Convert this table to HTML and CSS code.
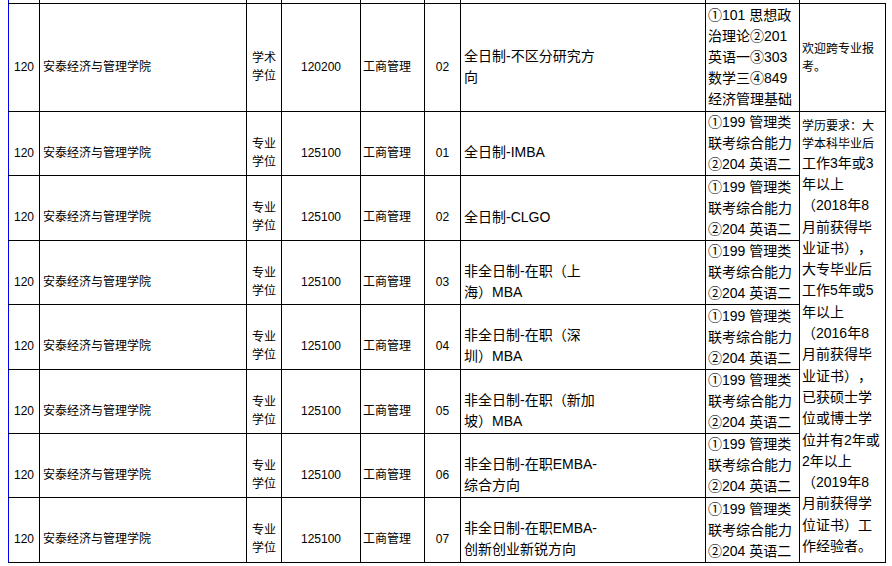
FILE: index.html
```html
<!DOCTYPE html>
<html lang="zh-CN">
<head>
<meta charset="utf-8">
<title>招生专业目录</title>
<link rel="stylesheet" href="styles.css">
</head>
<body>
<table class="grid">
<colgroup>
<col class="w1"><col class="w2"><col class="w3"><col class="w4"><col class="w5"><col class="w6"><col class="w7"><col class="w8"><col class="w9">
</colgroup>
<tbody>
<tr class="cut"><td></td><td></td><td></td><td></td><td></td><td></td><td></td><td></td><td></td></tr>
<tr class="h108">
<td class="c sh">120</td><td class="l sh">安泰经济与管理学院</td><td class="c sh">学术学位</td><td class="c sh">120200</td><td class="l2 sh">工商管理</td><td class="c sh">02</td><td class="dir sh"><div class="dirw">全日制-不区分研究方向</div></td><td class="exam">①101 思想政治理论②201 英语一③303 数学三④849 经济管理基础</td><td class="note1">欢迎跨专业报考。</td>
</tr>
<tr class="h64">
<td class="c sh">120</td><td class="l sh">安泰经济与管理学院</td><td class="c sh">专业学位</td><td class="c sh">125100</td><td class="l2 sh">工商管理</td><td class="c sh">01</td><td class="dir sh"><div class="dirw">全日制-IMBA</div></td><td class="exam">①199 管理类联考综合能力②204 英语二</td>
<td class="note" rowspan="7"><div class="note-a">学历要求：大学本科毕业后</div><div class="note-b">工作3年或3年以上（2018年8月前获得毕业证书），大专毕业后工作5年或5年以上（2016年8月前获得毕业证书），已获硕士学位或博士学位并有2年或2年以上（2019年8月前获得学位证书）工作经验者。</div></td>
</tr>
<tr class="h65">
<td class="c sh">120</td><td class="l sh">安泰经济与管理学院</td><td class="c sh">专业学位</td><td class="c sh">125100</td><td class="l2 sh">工商管理</td><td class="c sh">02</td><td class="dir sh"><div class="dirw">全日制-CLGO</div></td><td class="exam">①199 管理类联考综合能力②204 英语二</td>
</tr>
<tr class="h64">
<td class="c sh">120</td><td class="l sh">安泰经济与管理学院</td><td class="c sh">专业学位</td><td class="c sh">125100</td><td class="l2 sh">工商管理</td><td class="c sh">03</td><td class="dir sh"><div class="dirw">非全日制-在职（上海）MBA</div></td><td class="exam">①199 管理类联考综合能力②204 英语二</td>
</tr>
<tr class="h65">
<td class="c sh">120</td><td class="l sh">安泰经济与管理学院</td><td class="c sh">专业学位</td><td class="c sh">125100</td><td class="l2 sh">工商管理</td><td class="c sh">04</td><td class="dir sh"><div class="dirw">非全日制-在职（深圳）MBA</div></td><td class="exam">①199 管理类联考综合能力②204 英语二</td>
</tr>
<tr class="h64">
<td class="c sh">120</td><td class="l sh">安泰经济与管理学院</td><td class="c sh">专业学位</td><td class="c sh">125100</td><td class="l2 sh">工商管理</td><td class="c sh">05</td><td class="dir sh"><div class="dirw">非全日制-在职（新加坡）MBA</div></td><td class="exam">①199 管理类联考综合能力②204 英语二</td>
</tr>
<tr class="h64">
<td class="c sh">120</td><td class="l sh">安泰经济与管理学院</td><td class="c sh">专业学位</td><td class="c sh">125100</td><td class="l2 sh">工商管理</td><td class="c sh">06</td><td class="dir sh"><div class="dirw">非全日制-在职EMBA-综合方向</div></td><td class="exam">①199 管理类联考综合能力②204 英语二</td>
</tr>
<tr class="h65">
<td class="c sh">120</td><td class="l sh">安泰经济与管理学院</td><td class="c sh">专业学位</td><td class="c sh">125100</td><td class="l2 sh">工商管理</td><td class="c sh">07</td><td class="dir sh"><div class="dirw">非全日制-在职EMBA-创新创业新锐方向</div></td><td class="exam">①199 管理类联考综合能力②204 英语二</td>
</tr>
</tbody>
</table>
</body>
</html>
```
FILE: styles.css
```css
html, body {
  margin: 0;
  padding: 0;
  background: #ffffff;
}
body {
  font-family: "Liberation Sans", "Noto Sans CJK SC", sans-serif;
  color: #000000;
  overflow: hidden;
}
.grid {
  margin-left: 8px;
  border-collapse: collapse;
  table-layout: fixed;
  width: 877px;
  font-size: 12px;
  line-height: 18px;
  text-spacing-trim: space-all;
}
.w1 { width: 31px; }
.w2 { width: 207px; }
.w3 { width: 35px; }
.w4 { width: 79px; }
.w5 { width: 64px; }
.w6 { width: 36px; }
.w7 { width: 245px; }
.w8 { width: 94px; }
.w9 { width: 86px; }
.grid td {
  border: 1px solid #000000;
  padding: 0 2px;
  vertical-align: middle;
  overflow: hidden;
}
.grid td:first-child {
  border-left: 1px solid #0000ff;
}
.cut { height: 3px; }
.cut td {
  border-top: 0;
  padding: 0;
  height: 3px;
}
.cut td:last-child { border-right: 0; }
.h108 { height: 108px; }
.h64 { height: 64px; }
.h65 { height: 65px; }
.c { text-align: center; }
.l { text-align: left; padding-left: 3px !important; }
.l2 { text-align: left; }
.sh { padding-top: 18px !important; }
.dir {
  font-size: 14px;
  line-height: 21px;
  padding-left: 3px !important;
}
.dirw { width: 136px; }
.exam {
  font-size: 14px;
  line-height: 21px;
  padding: 0 1px 0 2px !important;
}
.note1 {
  padding: 0 3px 0 2px !important;
}
.note {
  padding: 0 3px 0 2px !important;
}
.note-a {
  font-size: 12px;
  line-height: 18px;
}
.note-b {
  font-size: 14px;
  line-height: 21.3px;
}
```
